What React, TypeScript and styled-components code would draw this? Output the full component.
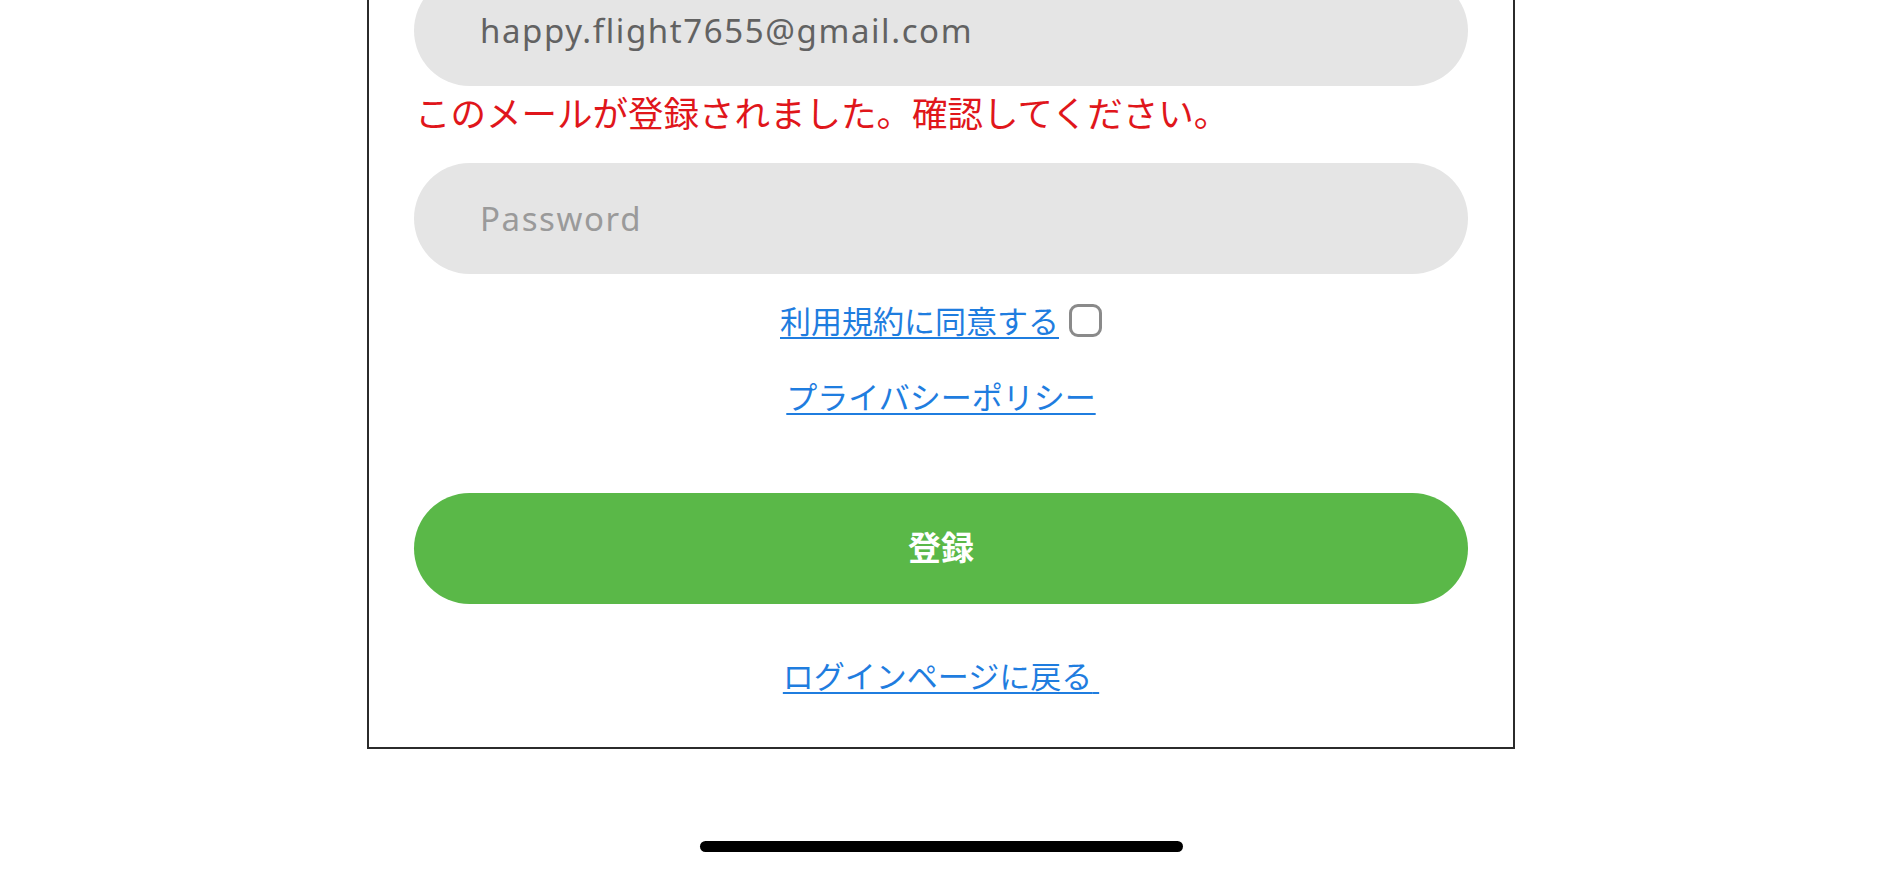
import styled, { createGlobalStyle } from "styled-components"

const GlobalStyle = createGlobalStyle`
  html, body {
    margin: 0;
    padding: 0;
    background: #ffffff;
    overflow: hidden;
  }

  body {
    font-family: "Noto Sans", "Noto Sans CJK JP", sans-serif;
  }
`

const Screen = styled.div`
  width: 1882px;
  height: 870px;
  display: flex;
  flex-direction: column;
  align-items: center;
  overflow: hidden;
`

const Card = styled.form`
  box-sizing: border-box;
  width: 1148px;
  margin-top: -60px;
  border: 2px solid #2b2b2b;
  padding: 33px 45px 52px;
  display: flex;
  flex-direction: column;
  align-items: center;
`

const Field = styled.input`
  box-sizing: border-box;
  width: 100%;
  height: 111px;
  border: none;
  outline: none;
  border-radius: 56px;
  background: #e5e5e5;
  padding: 0 0 0 66px;
  font-family: "Noto Sans", sans-serif;
  font-size: 33px;
  font-weight: 400;
  letter-spacing: 1.6px;
  color: #626262;
  margin-top: ${p => p.$gap || 0}px;

  &::placeholder {
    color: #9a9a9a;
  }
`

const ErrorText = styled.div`
  align-self: flex-start;
  margin: 6px 0 0 1px;
  height: 42px;
  line-height: 40px;
  font-family: "Noto Sans CJK JP", sans-serif;
  font-size: 35.5px;
  color: #e0161b;
  white-space: nowrap;
`

const LinkRow = styled.div`
  display: flex;
  align-items: center;
  gap: 10px;
  height: 40px;
  margin-top: ${p => p.$gap}px;
`

const TextLink = styled.a`
  font-family: "Noto Sans CJK JP", sans-serif;
  font-size: 31px;
  line-height: 40px;
  color: #1f7ddf;
  text-decoration: underline;
  text-decoration-thickness: 2px;
  text-underline-offset: 4px;
  white-space: pre;
  cursor: pointer;
`

const Check = styled.span`
  box-sizing: border-box;
  width: 33px;
  height: 33px;
  border: 3px solid #8a8a8a;
  border-radius: 9px;
  background: #ffffff;
`

const SubmitButton = styled.button`
  width: 100%;
  height: 111px;
  margin-top: 77px;
  padding: 0 0 6px;
  border: none;
  border-radius: 56px;
  background: #5ab848;
  color: #ffffff;
  font-family: "Noto Sans CJK JP", sans-serif;
  font-size: 33px;
  font-weight: 700;
  cursor: pointer;
`

const HomeBar = styled.div`
  width: 483px;
  height: 11px;
  margin-top: 92px;
  border-radius: 6px;
  background: #000000;
`

export default function App() {
  return (
    <>
      <GlobalStyle />
      <Screen>
        <Card onSubmit={e => e.preventDefault()}>
          <Field type="email" value="happy.flight7655@gmail.com" readOnly />
          <ErrorText>このメールが登録されました。確認してください。</ErrorText>
          <Field type="password" placeholder="Password" $gap={29} />
          <LinkRow $gap={26}>
            <TextLink>利用規約に同意する</TextLink>
            <Check />
          </LinkRow>
          <LinkRow $gap={36}>
            <TextLink>プライバシーポリシー</TextLink>
          </LinkRow>
          <SubmitButton type="submit">登録</SubmitButton>
          <LinkRow $gap={51}>
            <TextLink>ログインページに戻る{"\u00a0"}</TextLink>
          </LinkRow>
        </Card>
        <HomeBar />
      </Screen>
    </>
  )
}
